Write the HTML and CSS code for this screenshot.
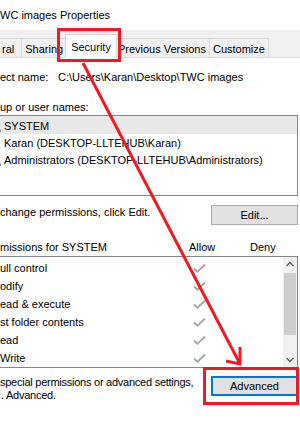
FILE: index.html
```html
<!DOCTYPE html>
<html lang="en">
<head>
    <meta charset="UTF-8">
    <meta name="viewport" content="width=device-width, initial-scale=1.0">
    <title>TWC images Properties</title>
    <link rel="stylesheet" href="styles.css">
</head>
<body>
    <div class="window">
        <div class="titlebar">WC images Properties</div>

        <!-- tab strip -->
        <div class="tabs">
            <div class="tab tab-cut">ral</div>
            <div class="tab">Sharing</div>
            <div class="tab active">Security</div>
            <div class="tab">Previous Versions</div>
            <div class="tab">Customize</div>
        </div>

        <div class="panel">
            <div class="object-row">
                <span class="object-label">ect name:</span>
                <span>C:\Users\Karan\Desktop\TWC images</span>
            </div>

            <div class="section-label">up or user names:</div>
            <div class="listbox">
                <div class="user selected">
                    <svg class="user-icon" viewBox="0 0 14 14"><circle cx="8" cy="5" r="2.6" fill="#6f8fb5"/><path d="M3 13c0-3 2.2-4.6 5-4.6s5 1.6 5 4.6z" fill="#4f79a8"/></svg>
                    <span>SYSTEM</span>
                </div>
                <div class="user no-icon">Karan (DESKTOP-LLTEHUB\Karan)</div>
                <div class="user">
                    <svg class="user-icon" viewBox="0 0 14 14"><circle cx="8" cy="5" r="2.6" fill="#6f8fb5"/><path d="M3 13c0-3 2.2-4.6 5-4.6s5 1.6 5 4.6z" fill="#4f79a8"/></svg>
                    <span>Administrators (DESKTOP-LLTEHUB\Administrators)</span>
                </div>
            </div>

            <div class="action-row">
                <p>change permissions, click Edit.</p>
                <button class="btn">Edit...</button>
            </div>

            <div class="perm-head">
                <span>missions for SYSTEM</span>
                <span>Allow</span>
                <span>Deny</span>
            </div>

            <div class="perm-list">
                <div class="perm-rows">
                    <div class="perm"><span>ull control</span><svg class="check" viewBox="0 0 13 10"><path d="M1 5.5l3.5 3.2L12 1.5"/></svg></div>
                    <div class="perm"><span>odify</span><svg class="check" viewBox="0 0 13 10"><path d="M1 5.5l3.5 3.2L12 1.5"/></svg></div>
                    <div class="perm"><span>ead &amp; execute</span><svg class="check" viewBox="0 0 13 10"><path d="M1 5.5l3.5 3.2L12 1.5"/></svg></div>
                    <div class="perm"><span>st folder contents</span><svg class="check" viewBox="0 0 13 10"><path d="M1 5.5l3.5 3.2L12 1.5"/></svg></div>
                    <div class="perm"><span>ead</span><svg class="check" viewBox="0 0 13 10"><path d="M1 5.5l3.5 3.2L12 1.5"/></svg></div>
                    <div class="perm"><span>Write</span><svg class="check" viewBox="0 0 13 10"><path d="M1 5.5l3.5 3.2L12 1.5"/></svg></div>
                </div>
                <div class="scrollbar">
                    <svg class="sb-arrow" viewBox="0 0 14 15"><path d="M3.5 9l3.5-3.5L10.5 9"/></svg>
                    <div class="sb-track"><div class="sb-thumb"></div></div>
                    <svg class="sb-arrow" viewBox="0 0 14 15"><path d="M3.5 6l3.5 3.5L10.5 6"/></svg>
                </div>
            </div>

            <div class="action-row advanced-row">
                <p>special permissions or advanced settings,<br><span class="indent">. Advanced.</span></p>
                <button class="btn btn-focus">Advanced</button>
            </div>
        </div>

        <!-- red annotation marks drawn over the dialog -->
        <svg class="marks" viewBox="0 0 300 441">
            <rect x="58.5" y="29.5" width="61" height="31"/>
            <rect x="204.5" y="368.5" width="93" height="35"/>
            <line x1="83" y1="63" x2="239" y2="362"/>
            <polyline points="226,361 240,364 240,347"/>
        </svg>
    </div>
</body>
</html>
```

FILE: styles.css
```css
* {
    margin: 0;
    padding: 0;
    box-sizing: border-box;
}

body {
    font-family: 'Liberation Sans', Arial, sans-serif;
    font-size: 11px;
    color: #000;
    background: #fff;
    width: 300px;
    height: 441px;
    overflow: hidden;
}

.window {
    position: relative;
    height: 441px;
    overflow: hidden;
}

.titlebar {
    height: 30px;
    line-height: 30px;
    font-size: 11px;
    white-space: nowrap;
}

.tabs {
    height: 28px;
    background: #f0f0f0;
    border-bottom: 1px solid #d9d9d9;
    display: flex;
    align-items: flex-end;
}

.tab {
    height: 19px;
    line-height: 20px;
    padding: 0 3px;
    border: 1px solid #d9d9d9;
    border-bottom: none;
    margin-left: -1px;
    white-space: nowrap;
}

.tab-cut {
    margin-left: 0;
    border-left: none;
    padding: 0 7px 0 2px;
}

.tab.active {
    height: 24px;
    line-height: 24px;
    background: #fff;
    margin: 0 -2px -1px -2px;
    padding: 0 5px;
    position: relative;
    z-index: 1;
}

.panel {
    padding-right: 2px;
}

.object-row {
    display: flex;
    margin-top: 11px;
    line-height: 16px;
    white-space: nowrap;
}

.object-label {
    width: 58px;
    flex-shrink: 0;
}

.section-label {
    margin-top: 14px;
    line-height: 16px;
}

.listbox {
    margin-left: -2px;
    height: 81px;
    border: 1px solid #828790;
    overflow: hidden;
}

.user {
    height: 17px;
    display: flex;
    align-items: center;
    gap: 2px;
    white-space: nowrap;
    padding-top: 1px;
}

.user.selected {
    height: 18px;
    background: #e8e8e8;
    padding-top: 2px;
}

.user.no-icon {
    padding-left: 5px;
}

.user-icon {
    width: 14px;
    height: 14px;
    margin-left: -11px;
    flex-shrink: 0;
}

.action-row {
    display: flex;
    justify-content: space-between;
    align-items: flex-start;
    margin-top: 9px;
}

.action-row p {
    line-height: 15px;
    white-space: nowrap;
}

.btn {
    width: 87px;
    height: 20px;
    background: #e1e1e1;
    border: 1px solid #adadad;
    font-family: inherit;
    font-size: 11px;
    color: #000;
}

.btn-focus {
    border: 2px solid #0078d7;
}

.perm-head {
    display: grid;
    grid-template-columns: 189px 61px 1fr;
    margin-top: 14px;
    line-height: 16px;
    white-space: nowrap;
}

.perm-list {
    margin-top: 1px;
    margin-left: -2px;
    height: 112px;
    border: 1px solid #828790;
    display: flex;
}

.perm-rows {
    flex: 1;
    padding: 2px 0 0 1px;
    overflow: hidden;
}

.perm {
    height: 18px;
    display: grid;
    grid-template-columns: 190px 1fr;
    align-items: center;
    white-space: nowrap;
}

.check {
    width: 13px;
    height: 10px;
    margin-left: 3px;
    fill: none;
    stroke: #a6a6a6;
    stroke-width: 1.8;
}

.scrollbar {
    width: 14px;
    background: #f0f0f0;
    display: flex;
    flex-direction: column;
}

.sb-arrow {
    width: 14px;
    height: 15px;
    fill: none;
    stroke: #606060;
    stroke-width: 1.3;
}

.sb-track {
    flex: 1;
    padding: 1px 1px 0;
}

.sb-thumb {
    height: 62px;
    background: #cdcdcd;
}

.advanced-row {
    margin-top: 8px;
}

.advanced-row p {
    line-height: 13px;
    letter-spacing: -0.25px;
}

.indent {
    padding-left: 1px;
}

.marks {
    position: absolute;
    left: 0;
    top: 0;
    width: 300px;
    height: 441px;
    pointer-events: none;
    fill: none;
    stroke: #ed1c24;
    stroke-width: 3;
}
```
